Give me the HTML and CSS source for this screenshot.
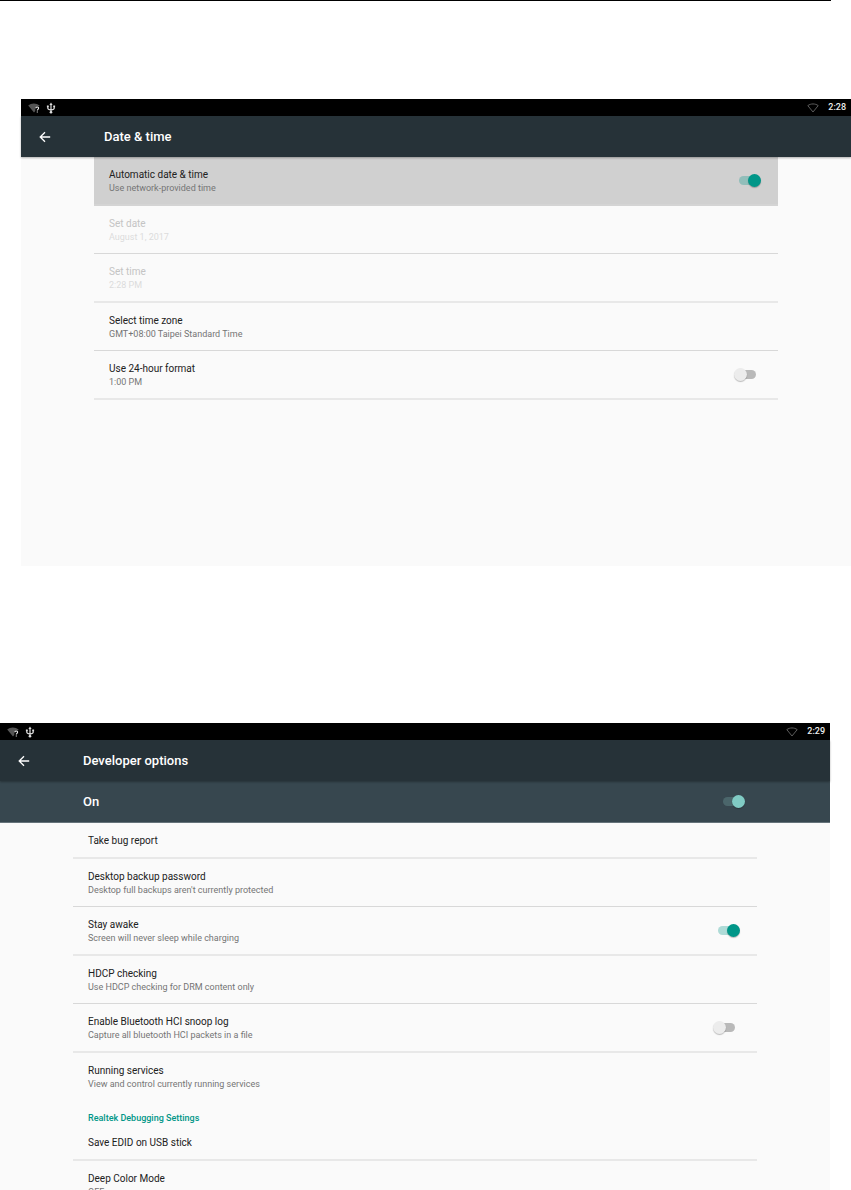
FILE: index.html
```html
<!DOCTYPE html>
<html lang="en">
	<head>
		<meta charset="utf-8" />
		<title>Settings</title>
<link rel="stylesheet" href="styles.css">
	</head>
	<body>
	<!-- shared status bar icons -->
	<svg class="symbols" width="0" height="0">
		<symbol id="wifi-unknown" viewBox="0 0 12 10">
			<path d="M0.2 2.6C3.2 -0.2 8.4 -0.2 11.6 2.6L10.9 3.6C8.6 3 7.2 4.2 7.3 6L7.3 8L6 9.6Z" fill="#555"/>
			<path d="M7.8 5.3C7.9 3.6 10.7 3.7 10.6 5.3C10.5 6.4 9.3 6.3 9.3 7.6M9.3 8.6V9.6" fill="none" stroke="#eee" stroke-width="1.1"/>
		</symbol>
		<symbol id="usb" viewBox="0 0 10 12">
			<path d="M5 2V10M1.8 4V6.2Q1.8 7.5 5 7.8Q8.2 7.5 8.2 6.2V4" fill="none" stroke="#ddd" stroke-width="1.2"/>
			<path d="M5 0.5L6.6 3H3.4ZM0.9 3.4H2.7V5.2H0.9ZM7.3 3.4H9.1V5.2H7.3Z" fill="#ddd"/>
			<circle cx="5" cy="10.2" r="1.3" fill="#ddd"/>
		</symbol>
		<symbol id="wifi-off" viewBox="0 0 12 10">
			<path d="M0.8 2.6C3.8 0.4 8.2 0.4 11.2 2.6L6 9Z" fill="none" stroke="#5c5c5c" stroke-width="1"/>
		</symbol>
		<symbol id="back" viewBox="0 0 12 12">
			<path d="M11.2 6H1.6M6 1.2L1.2 6L6 10.8" fill="none" stroke="#fff" stroke-width="1.3"/>
		</symbol>
	</svg>

	<hr class="rule">

	<section class="screen date-screen">
		<div class="status">
			<svg class="wifi"><use href="#wifi-unknown"/></svg>
			<svg class="usb"><use href="#usb"/></svg>
			<svg class="signal"><use href="#wifi-off"/></svg>
			<span class="clock">2:28</span>
		</div>
		<header class="bar">
			<button class="back" type="button" aria-label="Back"><svg><use href="#back"/></svg></button>
			<h1>Date &amp; time</h1>
		</header>
		<ul class="list">
			<li class="pressed thick">
				<label class="text" for="auto-time"><span class="name">Automatic date &amp; time</span><span class="info">Use network-provided time</span></label>
				<input class="switch" type="checkbox" id="auto-time" checked>
			</li>
			<li class="disabled">
				<div class="text"><span class="name">Set date</span><span class="info">August 1, 2017</span></div>
			</li>
			<li class="disabled thick">
				<div class="text"><span class="name">Set time</span><span class="info">2:28 PM</span></div>
			</li>
			<li>
				<div class="text"><span class="name">Select time zone</span><span class="info">GMT+08:00 Taipei Standard Time</span></div>
			</li>
			<li class="thick">
				<label class="text" for="format24"><span class="name">Use 24-hour format</span><span class="info">1:00 PM</span></label>
				<input class="switch" type="checkbox" id="format24">
			</li>
		</ul>
	</section>

	<section class="screen dev-screen">
		<div class="status">
			<svg class="wifi"><use href="#wifi-unknown"/></svg>
			<svg class="usb"><use href="#usb"/></svg>
			<svg class="signal"><use href="#wifi-off"/></svg>
			<span class="clock">2:29</span>
		</div>
		<header class="bar">
			<button class="back" type="button" aria-label="Back"><svg><use href="#back"/></svg></button>
			<h1>Developer options</h1>
		</header>
		<div class="master">
			<label for="dev-on">On</label>
			<input class="switch light" type="checkbox" id="dev-on" checked>
		</div>
		<ul class="list">
			<li class="single thick">
				<div class="text"><span class="name">Take bug report</span></div>
			</li>
			<li>
				<div class="text"><span class="name">Desktop backup password</span><span class="info">Desktop full backups aren't currently protected</span></div>
			</li>
			<li class="thick">
				<label class="text" for="awake"><span class="name">Stay awake</span><span class="info">Screen will never sleep while charging</span></label>
				<input class="switch" type="checkbox" id="awake" checked>
			</li>
			<li>
				<div class="text"><span class="name">HDCP checking</span><span class="info">Use HDCP checking for DRM content only</span></div>
			</li>
			<li class="thick">
				<label class="text" for="snoop"><span class="name">Enable Bluetooth HCI snoop log</span><span class="info">Capture all bluetooth HCI packets in a file</span></label>
				<input class="switch" type="checkbox" id="snoop">
			</li>
			<li class="last">
				<div class="text"><span class="name">Running services</span><span class="info">View and control currently running services</span></div>
			</li>
		</ul>
		<h2 class="category">Realtek Debugging Settings</h2>
		<ul class="list">
			<li class="single thick">
				<div class="text"><span class="name">Save EDID on USB stick</span></div>
			</li>
			<li>
				<div class="text"><span class="name">Deep Color Mode</span><span class="info">OFF</span></div>
			</li>
		</ul>
	</section>
	</body>
</html>
```

FILE: styles.css
```css
*{margin: 0;padding: 0;box-sizing: border-box;}
body{height: 100vh;overflow: hidden;background: #fff;font-family: Roboto, "Liberation Sans", sans-serif;color: #212121;}
.symbols{display: block;}
.rule{border: 0;height: 1px;background: #000;margin-right: 20px;}

.screen{background: #fafafa;}
.date-screen{margin: 98px 0 0 21px;min-height: 467px;}
.dev-screen{margin: 157px 21px 0 0;}

/* status bar */
.status{display: flex;align-items: center;height: 17px;padding: 0 5px 0 7px;background: #000;color: #eee;}
.status .wifi, .status .signal{width: 12px;height: 10px;}
.status .usb{width: 10px;height: 12px;margin-left: 6px;}
.status .signal{margin-left: auto;}
.clock{margin-left: 9px;font-size: 9px;font-weight: 500;line-height: 17px;}

/* title bar */
.bar{display: flex;align-items: center;height: 41px;background: #263238;position: relative;box-shadow: 0 1px 2px rgba(0,0,0,0.3);}
.back{width: 47px;height: 41px;border: 0;background: none;margin-right: 36px;}
.back svg{display: block;width: 12px;height: 12px;margin: 0 auto;}
.bar h1{font-size: 13px;font-weight: 500;color: #fff;}
.master{display: flex;align-items: center;justify-content: space-between;height: 42px;padding: 0 85px 0 83px;background: #37474f;border-bottom: 1px solid #65737a;color: #fff;font-size: 13px;font-weight: 500;}

/* preference list */
.list{list-style-type: none;margin: 0 73px;}
.list li{display: flex;align-items: center;justify-content: space-between;height: 48px;padding: 0 17px 0 15px;border-bottom: 1px solid #d8d8d8;}
.list li.thick{height: 49px;border-bottom: 2px solid #e8e8e8;}
.list li.single{height: 36px;}
.list li.last{border-bottom-color: transparent;}
.list li.pressed{background: #d0d0d0;border-bottom-color: #d4d4d4;}
.text{display: flex;flex-direction: column;padding-top: 2px;}
.name{font-size: 10px;line-height: 14px;}
.info{font-size: 9px;line-height: 13px;color: #757575;}
.disabled .name{color: #c4c4c4;}
.disabled .info{color: #dcdcdc;}
.category{height: 24px;padding: 11px 88px 0;font-size: 9px;line-height: 13px;font-weight: 500;color: #009688;}

/* switch: the track lies behind the thumb */
.switch{appearance: none;position: relative;width: 27px;height: 13px;}
.switch::before{content: "";position: absolute;left: 5px;top: 2px;width: 17px;height: 9px;border-radius: 5px;background: #b9b9b9;}
.switch::after{content: "";position: absolute;left: 0;top: 0;width: 13px;height: 13px;border-radius: 50%;background: #ececec;box-shadow: 0 1px 1px rgba(0,0,0,0.25);}
.switch:checked::before{background: rgba(0,150,136,0.3);}
.switch:checked::after{left: 14px;background: #009688;}
.switch.light::before{background: #4b666b;}
.switch.light::after{background: #80cbc4;}
```
